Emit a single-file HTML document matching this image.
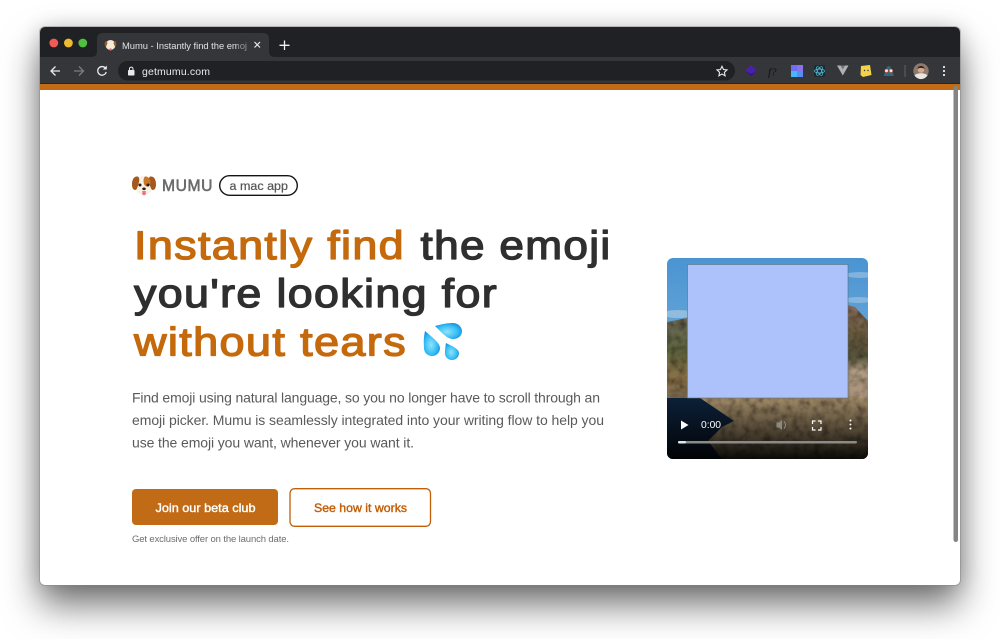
<!DOCTYPE html>
<html><head><meta charset="utf-8"><title>Mumu</title>
<style>
html,body{margin:0;padding:0;background:#fff;width:1000px;height:639px;overflow:hidden}
#win{position:absolute;left:40px;top:27px;width:920px;height:558px;border-radius:5px;background:#fff;box-shadow:0 0 0 1px rgba(130,130,130,.45),0 20px 36px rgba(0,0,0,.55),0 0 20px rgba(0,0,0,.16)}
svg{position:absolute;left:0;top:0}
text{font-family:"Liberation Sans",sans-serif}
.h{stroke-linejoin:round;stroke-linecap:round;paint-order:stroke}
.l{letter-spacing:1.200px}
</style></head><body>
<div id="win"></div>
<svg width="1000" height="639" viewBox="0 0 1000 639">
<defs>
<clipPath id="w"><rect x="40" y="27" width="920" height="558" rx="5"/></clipPath>
<clipPath id="v"><rect x="667" y="258" width="201" height="201" rx="6"/></clipPath>
<linearGradient id="sky" x1="0" y1="0" x2="0" y2="1"><stop offset="0" stop-color="#4a94d2"/><stop offset=".6" stop-color="#74aedb"/><stop offset="1" stop-color="#9cc2de"/></linearGradient>
<linearGradient id="fade" x1="0" y1="0" x2="0" y2="1"><stop offset="0" stop-color="#000" stop-opacity="0"/><stop offset="1" stop-color="#000" stop-opacity=".92"/></linearGradient>
<linearGradient id="rs" x1="0" y1="0" x2="0" y2="1"><stop offset="0" stop-color="#8a6e5c"/><stop offset=".3" stop-color="#6a5c40"/><stop offset=".55" stop-color="#57533a"/><stop offset=".7" stop-color="#b09c82"/><stop offset="1" stop-color="#a8917a"/></linearGradient>
<linearGradient id="ls" x1="0" y1="0" x2="0" y2="1"><stop offset="0" stop-color="#6e6a58"/><stop offset=".4" stop-color="#5f6440"/><stop offset=".75" stop-color="#8a7248"/><stop offset="1" stop-color="#7a6a52"/></linearGradient>
<radialGradient id="drop" cx=".45" cy=".55" r=".65"><stop offset="0" stop-color="#8fe3fb"/><stop offset=".6" stop-color="#35bdf3"/><stop offset="1" stop-color="#0a86e2"/></radialGradient>
<filter id="t" x="0" y="0" width="100%" height="100%"><feTurbulence type="fractalNoise" baseFrequency=".14" numOctaves="3" seed="4"/><feColorMatrix values="0 0 0 0 0 0 0 0 0 0 0 0 0 0 0 1.400 0 0 0 -.5"/><feGaussianBlur stdDeviation=".5"/><feComposite in2="SourceAlpha" operator="in" result="n"/><feMerge><feMergeNode in="SourceGraphic"/><feMergeNode in="n"/></feMerge></filter>
</defs>
<g clip-path="url(#w)">
<rect x="40" y="27" width="920" height="30" fill="#202124"/>
<rect x="40" y="57" width="920" height="27" fill="#35363a"/>
<rect x="40" y="83" width="920" height="1" fill="#26272a"/>
<rect x="40" y="84" width="920" height="6" fill="#c26b17"/>
<path d="M91 57c4 0 6-2 6-6v-12c0-4 2-6 6-6h160c4 0 6 2 6 6v12c0 4 2 6 6 6z" fill="#35363a"/>
<circle cx="53.800" cy="43" r="4.400" fill="#f25a55"/><circle cx="68.400" cy="43" r="4.400" fill="#f0bb2c"/><circle cx="82.800" cy="43" r="4.400" fill="#4fc03f"/>
<circle cx="110.500" cy="45" r="5" fill="#f3ead8"/><path d="M106 41c-2 1-1.500 5 0 6l1.500-4zM115 41c2 1 1.500 5 0 6l-1.500-4z" fill="#9a5a24"/><circle cx="110.500" cy="49.500" r="1.200" fill="#e56a7c"/>
<text x="122" y="49" font-size="9.400" fill="#dfe1e5" textLength="125" lengthAdjust="spacing">Mumu - Instantly find the emoj</text>
<rect x="238" y="36" width="12" height="18" fill="#35363a" opacity=".45"/>
<path d="M254.500 42l5.500 5.500M260 42l-5.500 5.500" stroke="#e8eaed" stroke-width="1.200"/>
<path d="M284.500 40.500v9.500M279.500 45.300h10" stroke="#f1f3f4" stroke-width="1.300"/>
<path d="M60 71h-8.500M55.500 66.500L51 71l4.500 4.500" fill="none" stroke="#e8eaed" stroke-width="1.300"/>
<path d="M74 71h9M79 66.500l4.500 4.500-4.500 4.500" fill="none" stroke="#7b7d80" stroke-width="1.300"/>
<path d="M105.500 68.300a4.300 4.300 0 1 0 .7 3.700" fill="none" stroke="#e8eaed" stroke-width="1.300"/><path d="M106.800 65.500v4h-4z" fill="#e8eaed"/>
<rect x="118" y="61" width="617" height="19.500" rx="9.700" fill="#202124"/>
<rect x="128" y="70" width="6.500" height="5.500" rx=".8" fill="#e8eaed"/><path d="M129.500 70v-1.500a1.800 1.800 0 0 1 3.500 0V70" fill="none" stroke="#e8eaed"/>
<text x="142" y="75" font-size="10.500" fill="#e8eaed" textLength="68" lengthAdjust="spacing">getmumu.com</text>
<path d="M722 66.300l1.500 3.200 3.500.4-2.600 2.400.7 3.500-3.100-1.800-3.100 1.800.7-3.500-2.600-2.400 3.500-.4z" fill="none" stroke="#e8eaed" stroke-width="1.100"/>
<path d="M751 65l5.500 5.500-5.500 5.500-5.500-5.500z" fill="#4b1fb0"/><path d="M745.500 71l5.500 5 5.500-5-5.500 3z" fill="#32128a"/>
<text x="768" y="75.500" font-size="11" font-style="italic" fill="#111" style="font-family:'Liberation Serif',serif">f?</text>
<rect x="791" y="65" width="12" height="12" fill="#6f6cf5"/><rect x="791" y="71" width="6" height="6" fill="#46b8f5"/><rect x="797" y="71" width="6" height="6" fill="#5a8cf5"/><rect x="797" y="65" width="6" height="6" fill="#8a72e8"/>
<rect x="814" y="65" width="11" height="12" rx="1.500" fill="#1f2a30"/><g fill="none" stroke="#53c1de" stroke-width=".7"><ellipse cx="819.500" cy="71" rx="5" ry="2"/><ellipse cx="819.500" cy="71" rx="5" ry="2" transform="rotate(60 819.500 71)"/><ellipse cx="819.500" cy="71" rx="5" ry="2" transform="rotate(120 819.500 71)"/></g>
<path d="M837 65.500h11.500l-5.700 10z" fill="#aeb0b2"/><path d="M840.500 65.500h4.500l-2.200 4z" fill="#6f7173"/>
<path d="M861 66l9-1 1.500 10-8.500 2-2.500-2z" fill="#f4d24a"/><circle cx="864.500" cy="70.500" r=".7" fill="#333"/><circle cx="868" cy="70.500" r=".7" fill="#333"/>
<path d="M884 76c0-3 1-4 2-5 0-3 1.500-5 2.800-5s2.800 2 2.800 5c1 1 2 2 2 5z" fill="#2f6b78"/><circle cx="886.500" cy="70.800" r="1.800" fill="#f1e6dc" stroke="#c9332d" stroke-width=".6"/><circle cx="891" cy="70.800" r="1.800" fill="#f1e6dc" stroke="#c9332d" stroke-width=".6"/>
<rect x="904.500" y="65" width="1" height="12" fill="#5f6368"/>
<circle cx="921" cy="71" r="7.700" fill="#8e7a6c"/><circle cx="921" cy="69.500" r="3.300" fill="#d3a98f"/><path d="M917.500 69c0-4 7-4 7 0-2-1.500-5-1.500-7 0z" fill="#2e2523"/><path d="M914.500 75.500c2-3 11-3 13 0a7.700 7.700 0 0 1-13 0z" fill="#e8e6e3"/>
<circle cx="944" cy="67" r="1.100" fill="#e8eaed"/><circle cx="944" cy="71" r="1.100" fill="#e8eaed"/><circle cx="944" cy="75" r="1.100" fill="#e8eaed"/>
<rect x="953.500" y="86" width="4.500" height="456" rx="2.200" fill="#858585"/>
</g>

<!-- logo dog -->
<g>
<ellipse cx="144" cy="185.500" rx="9" ry="9.500" fill="#f8f2e6"/>
<path d="M138 176.500c-4.500-.5-6 3.500-6 8 0 3.500 1.500 5.500 3 5.500 2 0 2.500-3 3.500-6 .8-2.500 1.500-5.500-.5-7.500z" fill="#a4581c"/>
<path d="M150 176.500c4.500-.5 6 3.500 6 8 0 3.500-1.500 5.500-3 5.500-2 0-2.500-3-3.500-6-.8-2.500-1.500-5.500.5-7.500z" fill="#a4581c"/>
<path d="M145.500 176.500c3 0 5 3 5 6 0 2.500-2 4-3.500 4-2.500 0-3.500-3-3.500-5.500 0-2.500 .8-4.500 2-4.500z" fill="#c9772b"/>
<circle cx="140" cy="185" r="1.500" fill="#2a1c14"/><circle cx="148" cy="185" r="1.500" fill="#2a1c14"/>
<ellipse cx="144" cy="188.800" rx="1.800" ry="1.300" fill="#2a1c14"/><path d="M142.300 191h3.500v2.500a1.700 1.700 0 0 1-3.500 0z" fill="#ec6f86"/>
</g>
<text class="h" x="162" y="191" font-size="16.500" fill="#6c6c6c" stroke="#6c6c6c" stroke-width=".6" style="letter-spacing:.6px" textLength="51" lengthAdjust="spacingAndGlyphs">MUMU</text>
<rect x="219.700" y="175.700" width="77.600" height="19.600" rx="9.800" fill="#fff" stroke="#141414" stroke-width="1.400"/>
<text class="h" x="229.500" y="190" font-size="11.500" fill="#555" stroke="#555" stroke-width=".2" textLength="58.500" lengthAdjust="spacingAndGlyphs">a mac app</text>

<!-- heading -->
<g font-size="40">
<g fill="#c4690c" stroke="#c4690c" stroke-width="1.300" class="h">
<text class="l" x="134" y="259" textLength="271" lengthAdjust="spacingAndGlyphs">Instantly find</text>
<text class="l" x="134" y="355.500" textLength="273" lengthAdjust="spacingAndGlyphs">without tears</text>
</g>
<g fill="#2f2f2f" stroke="#2f2f2f" stroke-width="1.300" class="h">
<text class="l" x="420.500" y="259" textLength="191" lengthAdjust="spacingAndGlyphs">the emoji</text>
<text class="l" x="134" y="307" textLength="364" lengthAdjust="spacingAndGlyphs">you're looking for</text>
</g>
</g>
<!-- droplets -->
<g fill="url(#drop)">
<path d="M425 331C423 340 424 345 424 348C424 353 428 356 432 356C437 356 440 352 440 348C440 343 432 337 425 331z"/>
<path d="M435 326C442 324 448 323 453 323C458 323 462 327 462 331C462 336 458 339 453 339C447 339 441 332 435 326z"/>
<path d="M446 343C445 349 445 351 445 353C445 357 448 360 452 360C456 360 459 357 459 353C459 349 452 346 446 343z"/>
</g>

<!-- paragraph -->
<g font-size="14" fill="#5a5a5a">
<text x="132" y="402.500" textLength="468" lengthAdjust="spacing">Find emoji using natural language, so you no longer have to scroll through an</text>
<text x="132" y="425" textLength="472" lengthAdjust="spacing">emoji picker. Mumu is seamlessly integrated into your writing flow to help you</text>
<text x="132" y="447.500" textLength="282" lengthAdjust="spacing">use the emoji you want, whenever you want it.</text>
</g>

<!-- buttons -->
<rect x="132" y="489" width="146" height="36" rx="4" fill="#c26b17"/>
<text class="h" x="155.500" y="512" font-size="12" fill="#fff" stroke="#fff" stroke-width=".4" textLength="100" lengthAdjust="spacingAndGlyphs">Join our beta club</text>
<rect x="290" y="488.700" width="140.500" height="37.600" rx="4.500" fill="#fff" stroke="#c25e08" stroke-width="1.300"/>
<text class="h" x="314" y="512" font-size="12" fill="#c25e08" stroke="#c25e08" stroke-width=".4" textLength="93" lengthAdjust="spacingAndGlyphs">See how it works</text>
<text x="132" y="542" font-size="9.500" fill="#6d6d6d" textLength="157" lengthAdjust="spacing">Get exclusive offer on the launch date.</text>

<!-- video -->
<g clip-path="url(#v)">
<rect x="667" y="258" width="201" height="201" fill="url(#sky)"/>
<ellipse cx="678" cy="314" rx="16" ry="4" fill="#c3d8e6" opacity=".5"/>
<ellipse cx="860" cy="275" rx="14" ry="3" fill="#bcd5e8" opacity=".45"/>
<ellipse cx="858" cy="300" rx="14" ry="3" fill="#bcd5e8" opacity=".45"/>
<path d="M667 322l20-4v80h-20z" fill="url(#ls)" filter="url(#t)"/>
<path d="M848 305l7 2 13 14v78h-20z" fill="url(#rs)" filter="url(#t)"/>
<rect x="667" y="398" width="201" height="61" fill="#0c2038"/>
<path d="M700 398H868v61H722l-14-18 14-14 12-6z" fill="#a08a68" filter="url(#t)"/>
<rect x="667" y="398" width="201" height="61" fill="url(#fade)"/>
<rect x="687.500" y="264.500" width="160.500" height="133.500" fill="#adc2fb" stroke="#5d6f7c" stroke-width=".6"/>
<path d="M681 420.500l7.500 4.500-7.500 4.500z" fill="#fff"/>
<text x="701" y="428" font-size="10" fill="#fff" textLength="20" lengthAdjust="spacingAndGlyphs">0:00</text>
<path d="M776.500 422.500h2.500l3-2.500v10l-3-2.500h-2.500z" fill="#8a8a84"/><path d="M784 421.500c2 2 2 5 0 7" fill="none" stroke="#8a8a84"/>
<path d="M812.500 424v-3h3M818 421h3v3M821 427v3h-3M815.500 430h-3v-3" fill="none" stroke="#fff" stroke-width="1.200"/>
<circle cx="850.500" cy="420.500" r="1" fill="#fff"/><circle cx="850.500" cy="424.500" r="1" fill="#fff"/><circle cx="850.500" cy="428.500" r="1" fill="#fff"/>
<rect x="678" y="441" width="179" height="2.500" rx="1.200" fill="#8a8a88"/>
<rect x="678" y="441" width="8" height="2.500" rx="1.200" fill="#e6e6e6"/>
</g>
</svg>
</body></html>
